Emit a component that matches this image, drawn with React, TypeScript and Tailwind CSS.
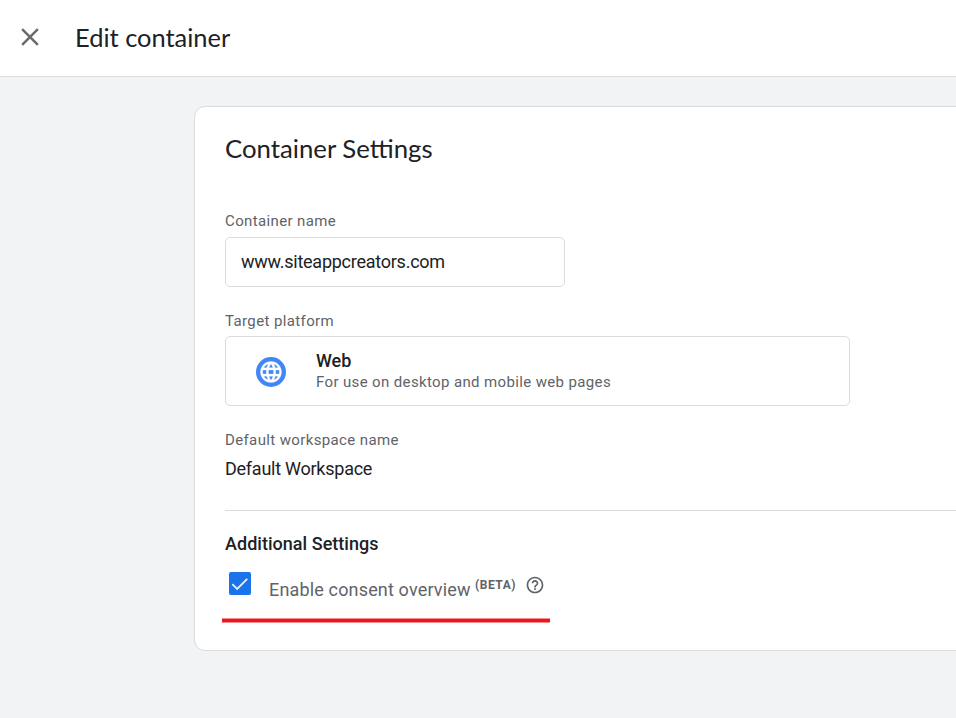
import React from "react";

function CloseIcon() {
  return (
    <svg className="mb-[3px] block h-[30px] w-[30px]" viewBox="0 0 24 24" fill="#6b6b6b">
      <path d="M19 6.41L17.59 5 12 10.59 6.41 5 5 6.41 10.59 12 5 17.59 6.41 19 12 13.41 17.59 19 19 17.59 13.41 12z" />
    </svg>
  );
}

function GlobeIcon() {
  return (
    <svg className="mt-[2px] block h-[30px] w-[30px]" viewBox="0 0 30 30">
      <circle cx="15" cy="15" r="15" fill="#4285f4" />
      <g transform="translate(2.4 2.4) scale(1.05)" fill="#fff" stroke="#fff" strokeWidth="0.3">
        <path d="M11.99 2C6.47 2 2 6.48 2 12s4.47 10 9.99 10C17.52 22 22 17.52 22 12S17.52 2 11.99 2zm6.93 6h-2.95c-.32-1.25-.78-2.45-1.38-3.56 1.84.63 3.37 1.91 4.33 3.56zM12 4.04c.83 1.2 1.48 2.53 1.91 3.96h-3.82c.43-1.43 1.08-2.76 1.91-3.96zM4.26 14C4.1 13.36 4 12.69 4 12s.1-1.36.26-2h3.38c-.08.66-.14 1.32-.14 2s.06 1.34.14 2H4.26zm.82 2h2.95c.32 1.25.78 2.45 1.38 3.56-1.84-.63-3.37-1.9-4.33-3.56zm2.95-8H5.08c.96-1.66 2.49-2.93 4.33-3.56C8.81 5.55 8.35 6.75 8.03 8zM12 19.96c-.83-1.2-1.48-2.53-1.91-3.96h3.82c-.43 1.43-1.08 2.76-1.91 3.96zM14.34 14H9.66c-.09-.66-.16-1.32-.16-2s.07-1.35.16-2h4.68c.09.65.16 1.32.16 2s-.07 1.34-.16 2zm.25 5.56c.6-1.11 1.06-2.31 1.38-3.56h2.95c-.96 1.65-2.49 2.93-4.33 3.56zM16.36 14c.08-.66.14-1.32.14-2s-.06-1.34-.14-2h3.38c.16.64.26 1.31.26 2s-.1 1.36-.26 2h-3.38z" />
      </g>
    </svg>
  );
}

function HelpIcon() {
  return (
    <svg className="block h-5 w-5" viewBox="0 0 24 24" fill="#5f6368">
      <path d="M11 18h2v-2h-2v2zm1-16C6.48 2 2 6.48 2 12s4.48 10 10 10 10-4.48 10-10S17.52 2 12 2zm0 18c-4.41 0-8-3.59-8-8s3.59-8 8-8 8 3.59 8 8-3.59 8-8 8zm0-14c-2.21 0-4 1.79-4 4h2c0-1.1.9-2 2-2s2 .9 2 2c0 2-3 1.75-3 5h2c0-2.25 3-2.5 3-5 0-2.21-1.79-4-4-4z" />
    </svg>
  );
}

export default function App() {
  return (
    <div className="h-[718px] w-[956px] overflow-hidden bg-[#f1f3f4] font-['Roboto',sans-serif] text-[#202124]">
      <header className="flex h-[77px] items-center border-b border-[#dadce0] bg-white pl-[15px]">
        <CloseIcon />
        <h1 className="mb-[2px] ml-[30px] font-['Lato',sans-serif] text-[25.45px] leading-8">Edit container</h1>
      </header>
      <main className="pt-[29px] pl-[194px]">
        <section className="h-[545px] w-[800px] rounded-[11px] border border-[#dadce0] bg-white pl-[30px]">
          <h2 className="pt-[25px] pb-px font-['Lato',sans-serif] text-[25.75px] leading-8">Container Settings</h2>
          <label className="mt-[46px] block text-[15px] leading-5 tracking-[0.37px] text-[#5f6368]">Container name</label>
          <div className="mt-[6px] flex h-[50px] w-[340px] items-center rounded-[5px] border border-[#dadce0] pb-[2px] pl-[15px] text-[18px] tracking-[-0.25px]">www.siteappcreators.com</div>
          <label className="mt-[24px] block text-[15px] leading-5 tracking-[0.38px] text-[#5f6368]">Target platform</label>
          <div className="mt-[5px] flex h-[70px] w-[625px] items-center rounded-[5px] border border-[#dadce0] pl-[30px]">
            <GlobeIcon />
            <div className="ml-[30px]">
              <div className="text-[18px] leading-[21px] font-medium">Web</div>
              <div className="text-[15px] leading-[22px] tracking-[0.365px] text-[#5f6368]">For use on desktop and mobile web pages</div>
            </div>
          </div>
          <div className="mt-[24px] text-[15px] leading-5 tracking-[0.37px] text-[#5f6368]">Default workspace name</div>
          <div className="mt-[7px] text-[18px] leading-6 tracking-[-0.25px]">Default Workspace</div>
          <div className="mt-[29px] h-px bg-[#dadce0]" />
          <h3 className="mt-[21px] text-[18px] leading-6 font-medium tracking-[0.03px]">Additional Settings</h3>
          <div className="mt-[16px] ml-[4px] flex h-[36px] items-start">
            <div className="flex h-[23px] w-[22px] items-center justify-center rounded-[2px] bg-[#1a73e8]">
              <svg className="h-[22px] w-[22px]" viewBox="0 0 24 24" fill="none" stroke="#e8f0fe" strokeWidth="2">
                <path d="M3.6 12.1 8.9 17.3 19.9 6.3" />
              </svg>
            </div>
            <span className="mt-[6px] ml-[18px] text-[18px] leading-6 tracking-[0.16px] text-[#5f6368]">Enable consent overview</span>
            <span className="mt-[5px] ml-[4.5px] text-[12px] leading-4 font-bold tracking-[0.5px] text-[#5f6368]">(BETA)</span>
            <span className="mt-[3px] ml-[9px]"><HelpIcon /></span>
          </div>
          <div className="mt-[10px] -ml-[3px] h-[5px] w-[327.5px] border-y border-[#f58c8e] bg-[#e8191e]" />
        </section>
      </main>
    </div>
  );
}
